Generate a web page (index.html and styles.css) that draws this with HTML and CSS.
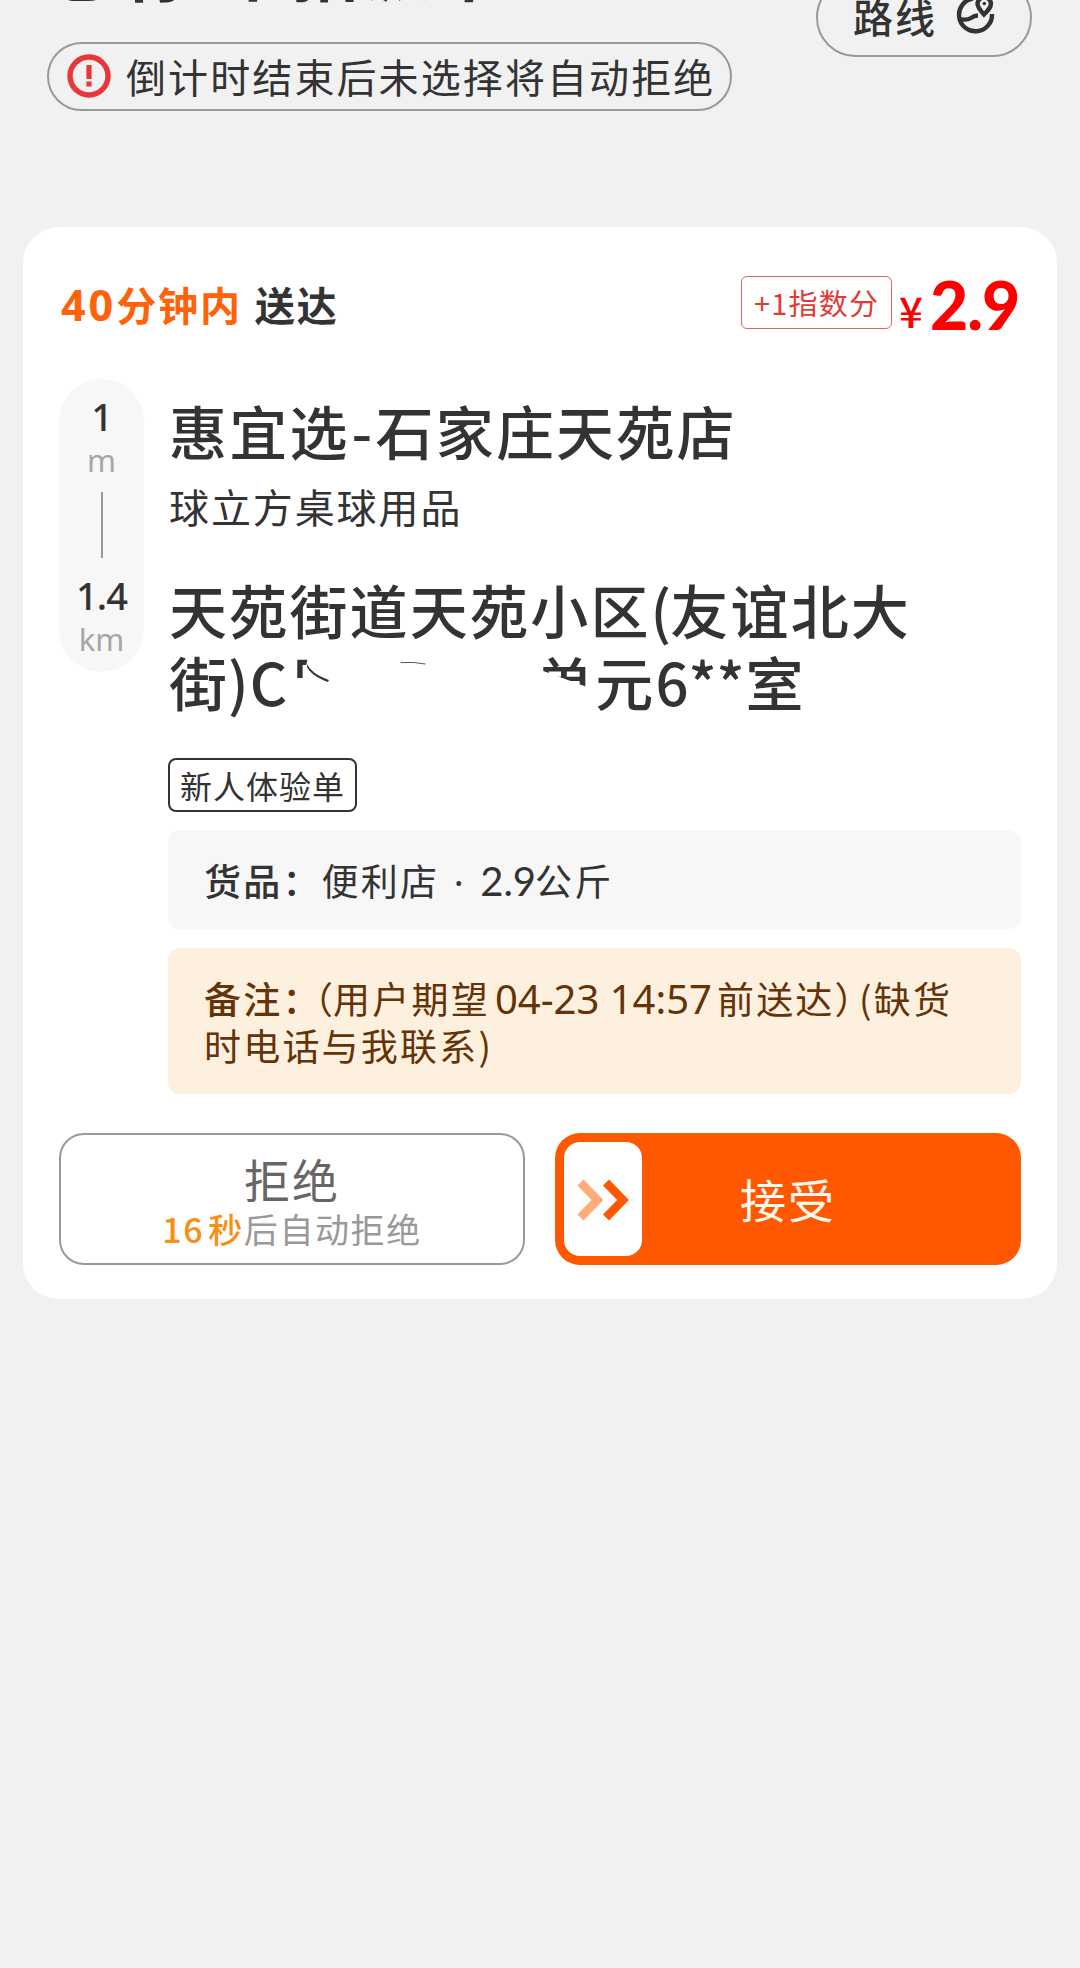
FILE: index.html
```html
<!DOCTYPE html>
<html lang="zh-CN">
<head>
    <meta charset="UTF-8">
    <title>指派单</title>
    <link rel="stylesheet" href="styles.css">
</head>
<body>
    <header class="top">
        <div class="top-left">
            <h1>您有<span class="count">1</span>个指派单</h1>
            <div class="alert">
                <svg class="alert-icon" viewBox="0 0 44 44">
                    <circle cx="22" cy="22" r="19" fill="none" stroke="#e93638" stroke-width="5.4"/>
                    <rect x="19.4" y="11" width="5.2" height="14" fill="#e93638"/>
                    <rect x="19.4" y="27.5" width="5.2" height="5" fill="#e93638"/>
                </svg>
                <span>倒计时结束后未选择将自动拒绝</span>
            </div>
        </div>
        <div class="route-btn">
            <span>路线</span>
            <svg class="route-icon" viewBox="0 0 40 40" fill="none" stroke="#333" stroke-width="4.4">
                <path d="M18 2.500A16.500 16.500 0 1 0 37 18"/>
                <path d="M3.500 23C9 24 13 24 16 22C18 20.500 20 19.500 23 19.500"/>
                <path d="M29 18.500C25.500 14.500 22.500 11.500 22.500 7.500A6.800 6.800 0 0 1 36 7.500C36 11.500 33 14.500 29 18.500Z"/>
                <circle cx="29.300" cy="7.500" r="1.800" fill="#333" stroke="none"/>
            </svg>
        </div>
    </header>

    <main class="card">
        <div class="card-head">
            <div class="deadline"><span class="time"><span class="num">40</span>分钟内</span><span>送达</span></div>
            <div class="price">
                <span class="score">+1指数分</span>
                <span class="yen">¥</span>
                <span class="amount">2.9</span>
            </div>
        </div>

        <div class="order">
            <div class="distance">
                <b>1</b>
                <i>m</i>
                <span class="line"></span>
                <b>1.4</b>
                <i>km</i>
            </div>
            <div class="info">
                <h2>惠宜选<span class="dash">-</span>石家庄天苑店</h2>
                <p class="shop">球立方桌球用品</p>
                <div class="address">
                    <div>天苑街道天苑小区<span class="paren">(</span>友谊北大</div>
                    <div class="address-end">
                        <span class="street">街)C</span>
                        <span class="cut-a">区</span>
                        <svg class="smudge" viewBox="0 0 229 71">
                            <path d="M0 19C3 25 10 31 22 35L21 37C10 33 3 28 0 22Z" fill="#333"/>
                            <path d="M94 17.500Q108 16.500 119 19" fill="none" stroke="#555" stroke-width="1"/>
                        </svg>
                        <span class="cut-b">单</span>
                        <span>元</span>
                        <span class="room">6**</span>
                        <span>室</span>
                    </div>
                </div>
                <span class="tag">新人体验单</span>
                <div class="goods"><b>货品：</b>便利店<span class="dot">·</span><span class="kg">2.9</span>公斤</div>
                <div class="note">
                    <div><b>备注：</b><span class="open">（</span>用户期望<span class="date">04-23 14:57</span>前送达<span class="close">）</span>(缺货</div>
                    <div>时电话与我联系)</div>
                </div>
            </div>
        </div>

        <div class="actions">
            <div class="reject">
                <span class="label">拒绝</span>
                <span class="countdown"><em><span class="sec">16</span>秒</em>后自动拒绝</span>
            </div>
            <div class="accept">
                <div class="thumb">
                    <svg class="arrows" viewBox="0 0 52 42" fill="none" stroke-width="8.500">
                        <path d="M3.500 3.500L20.500 21L3.500 38.500" stroke="#ffab7a"/>
                        <path d="M29 3.500L46 21L29 38.500" stroke="#ff5800"/>
                    </svg>
                </div>
                <span class="label">接受</span>
            </div>
        </div>
    </main>
</body>
</html>
```

FILE: styles.css
```css
* {
    box-sizing: border-box;
}
body {
    margin: 0;
    background-color: #f1f1f1;
    color: #333;
    font-family: "Noto Sans CJK SC", sans-serif;
    min-height: 1968px;
    overflow: hidden;
    white-space: nowrap;
}
h1, h2, p {
    margin: 0;
}
b {
    font-weight: 500;
}
i, em {
    font-style: normal;
}

/* header */
.top {
    display: flex;
    justify-content: space-between;
    align-items: flex-start;
    height: 227px;
    padding: 0 48px 0 47px;
}
.top h1 {
    margin-top: -67px;
    font-size: 68px;
    line-height: 68px;
    font-weight: 700;
    letter-spacing: 4px;
}
.count {
    display: inline-block;
    width: 28px;
}
.alert {
    display: flex;
    align-items: center;
    width: 685px;
    height: 69px;
    margin-top: 41px;
    padding-left: 18px;
    border: 2px solid #999;
    border-radius: 35px;
    font-size: 40px;
    line-height: 60px;
    letter-spacing: 2.1px;
}
.alert-icon {
    width: 44px;
    height: 44px;
    margin: -2px 15px 0 0;
}
.alert span {
    margin-top: -1px;
}
.route-btn {
    display: flex;
    align-items: center;
    width: 216px;
    height: 79px;
    margin-top: -22px;
    padding-left: 35px;
    border: 2px solid #999;
    border-radius: 40px;
    font-size: 40px;
    line-height: 60px;
    letter-spacing: 2px;
    font-weight: 500;
}
.route-btn span {
    margin-top: -4px;
}
.route-icon {
    width: 40px;
    height: 40px;
    margin: -4px 0 0 18px;
}

/* order card */
.card {
    width: 1034px;
    height: 1072px;
    margin-left: 23px;
    padding: 43px 36px 33px;
    background-color: #fff;
    border-radius: 36px;
}
.card-head {
    display: flex;
    justify-content: space-between;
    height: 66px;
}
.deadline {
    margin: 4px 0 0 2px;
    font-size: 40px;
    line-height: 60px;
    font-weight: 700;
    letter-spacing: 1.900px;
}
.time {
    margin-right: 13px;
    color: #ff6208;
}
.num {
    font-family: "Noto Sans", sans-serif;
    font-size: 43px;
    letter-spacing: 3px;
}
.price {
    display: flex;
    color: #f00;
}
.score {
    width: 151px;
    height: 53px;
    margin-top: 6px;
    border: 1.500px solid #d26a66;
    border-radius: 6px;
    color: #e23a36;
    font-size: 29px;
    line-height: 51px;
    letter-spacing: 1.200px;
    text-align: center;
}
.yen {
    width: 31px;
    margin: 15px 0 0 7px;
    font-size: 42px;
    line-height: 50px;
    font-weight: 500;
}
.amount {
    width: 91px;
    font-family: Lato, sans-serif;
    font-size: 66px;
    line-height: 69px;
    font-weight: 900;
    letter-spacing: -1px;
}
.order {
    display: flex;
    gap: 24px;
    margin-top: 43px;
}
.distance {
    display: flex;
    flex-direction: column;
    align-items: center;
    width: 85px;
    height: 293px;
    padding-top: 15px;
    background-color: #f7f7f7;
    border-radius: 43px;
    font-family: "Noto Sans", sans-serif;
}
.distance b {
    font-size: 38px;
    line-height: 44px;
    letter-spacing: -1px;
}
.distance i {
    color: #a6a6a6;
    font-size: 31px;
    line-height: 44px;
}
.distance .line {
    width: 2px;
    height: 66px;
    margin: 10px 0 15px;
    background-color: #999;
}
.info {
    flex: 1;
}
h2, .address {
    padding-left: 1px;
    font-size: 58px;
    font-weight: 500;
    letter-spacing: 2.200px;
}
h2 {
    margin-top: 15px;
    line-height: 72px;
}
.dash {
    margin: 0 1px 0 2px;
}
.shop {
    margin-top: 10px;
    padding-left: 1px;
    font-size: 40px;
    line-height: 60px;
    letter-spacing: 1.900px;
}
.address {
    margin-top: 37px;
    line-height: 72px;
}
.paren {
    letter-spacing: -1px;
}
.address-end {
    display: flex;
}
.street {
    width: 123px;
    letter-spacing: 1px;
}
/* the middle of the address is wiped out */
.cut-a {
    width: 15px;
    clip-path: polygon(0 0, 19px 0, 11px 33px, 0 33px);
}
.smudge {
    width: 228px;
    height: 71px;
}
.cut-b {
    clip-path: polygon(0 0, 100% 0, 100% 45px, 0 23px);
}
.room {
    width: 90px;
    letter-spacing: 0;
}
.tag {
    display: block;
    width: 189px;
    height: 54px;
    margin-top: 41px;
    border: 2px solid #333;
    border-radius: 8px;
    font-size: 32px;
    line-height: 50px;
    text-align: center;
    letter-spacing: 1px;
}
.goods, .note {
    padding-left: 36px;
    border-radius: 12px;
    font-size: 37px;
    letter-spacing: 2.200px;
}
.goods {
    height: 99px;
    margin-top: 18px;
    background-color: #f7f7f7;
    line-height: 100px;
}
.dot {
    display: inline-block;
    width: 41px;
    text-align: center;
    font-family: "Noto Sans", sans-serif;
}
.kg {
    margin-right: -1px;
    font-family: Lato, sans-serif;
    font-size: 40px;
    letter-spacing: 0;
}
.note {
    height: 146px;
    margin-top: 19px;
    padding-top: 27px;
    background-color: #fef0df;
    color: #653308;
    line-height: 46px;
}
.open, .close {
    font-feature-settings: "halt";
    letter-spacing: 0;
}
.open {
    margin-left: -7px;
}
.close {
    margin-right: 6px;
}
.date {
    margin: 0 5px 0 5px;
    font-family: "Noto Sans", sans-serif;
    font-size: 40px;
    letter-spacing: 0;
}

/* buttons */
.actions {
    display: flex;
    justify-content: space-between;
    margin-top: 39px;
}
.reject, .accept {
    display: flex;
    flex-direction: column;
    align-items: center;
    width: 466px;
    height: 132px;
    border-radius: 25px;
}
.label {
    font-size: 46px;
    letter-spacing: 2px;
}
.reject {
    border: 2px solid #999;
    color: #666;
}
.reject .label {
    margin-top: 14px;
    line-height: 58px;
}
.countdown {
    color: #999;
    font-size: 34px;
    line-height: 43px;
    letter-spacing: 1.600px;
}
.countdown em {
    color: #f78f12;
    font-weight: 500;
}
.sec {
    margin-right: 4px;
}
.accept {
    position: relative;
    justify-content: center;
    background-color: #ff5800;
    color: #fffaf0;
}
.accept .label {
    margin-top: -3px;
}
.thumb {
    position: absolute;
    left: 9px;
    top: 9px;
    display: flex;
    align-items: center;
    justify-content: center;
    width: 78px;
    height: 114px;
    background-color: #fff;
    border-radius: 16px;
}
.arrows {
    width: 52px;
    height: 42px;
    margin-top: 2px;
}
```
